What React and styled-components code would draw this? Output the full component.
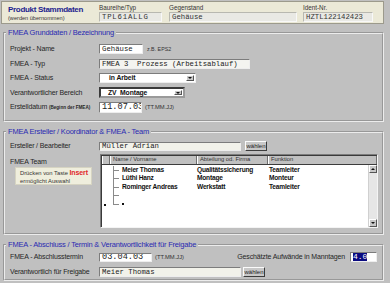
import React from "react";
import styled, { createGlobalStyle } from "styled-components";

const GlobalStyle = createGlobalStyle`
  html, body {
    margin: 0;
    padding: 0;
    background: #c0c0c0;
  }
  body {
    width: 390px;
    height: 283px;
    overflow: hidden;
    font-family: "Liberation Sans", Arial, sans-serif;
    color: #222;
  }
`;

const Page = styled.div`
  width: 390px;
  height: 283px;
  box-sizing: border-box;
  padding: 1px 6px 0 1px;
  display: flex;
  flex-direction: column;
`;

const Header = styled.div`
  height: 23px;
  box-sizing: border-box;
  display: flex;
  align-items: flex-start;
  background: #ebe9d7;
  border: 1px solid #9c9a8c;
`;

const TitleBlock = styled.div`
  width: 91px;
  padding: 3px 0 0 6px;
`;

const Title = styled.div`
  font-size: 8px;
  line-height: 10px;
  font-weight: bold;
  letter-spacing: -0.3px;
  color: #1e1e8e;
  white-space: nowrap;
`;

const SubTitle = styled.div`
  font-size: 5.6px;
  line-height: 7px;
  color: #333;
  white-space: nowrap;
`;

const HeadCol = styled.div`
  width: ${p => p.$w}px;
  margin-right: ${p => p.$mr || 0}px;
  padding-top: 1px;
`;

const HeadLabel = styled.div`
  font-size: 6.3px;
  line-height: 9px;
  color: #333;
`;

const HeadField = styled.div`
  height: 10px;
  box-sizing: border-box;
  background: #e9e9e4;
  border: 1px solid #b8b8b0;
  border-right-color: #f8f8f8;
  border-bottom-color: #f8f8f8;
  font-family: "Liberation Mono", monospace;
  font-size: 7.3px;
  line-height: 8px;
  padding-left: 2px;
  color: #333;
  letter-spacing: ${p => p.$ls || 0}px;
`;

const Section = styled.fieldset`
  margin: ${p => p.$mt}px 0 0 2px;
  padding: ${p => p.$pt}px 4px ${p => p.$pb}px 5px;
  border: 2px groove #ececec;
  min-width: 0;
`;

const Legend = styled.legend`
  margin-left: -4px;
  padding: 0 2px;
  font-size: 7.5px;
  letter-spacing: -0.2px;
  line-height: 10px;
  color: #2a2ab2;
`;

const Row = styled.div`
  display: grid;
  grid-template-columns: 89px 1fr;
  align-items: ${p => (p.$top ? "start" : "center")};
  height: ${p => p.$h || 14.5}px;
`;

const Label = styled.div`
  font-size: 7px;
  letter-spacing: -0.15px;
  line-height: 10px;
  color: #262626;
  white-space: nowrap;
  margin-top: ${p => p.$mt || 0}px;
`;

const Tiny = styled.span`
  font-size: 4.6px;
  letter-spacing: 0;
  font-weight: bold;
`;

const Line = styled.div`
  display: flex;
  align-items: center;
  gap: ${p => p.$gap || 4}px;
  min-width: 0;
`;

const TextBox = styled.div`
  width: ${p => p.$w}px;
  height: ${p => p.$h || 10}px;
  box-sizing: border-box;
  flex-shrink: 0;
  background: ${p => p.$bg || "#fff"};
  border: 1px solid #7c7c7c;
  border-right-color: #eee;
  border-bottom-color: #eee;
  font-family: "Liberation Mono", monospace;
  font-size: ${p => p.$fs || 7.3}px;
  line-height: ${p => (p.$h || 10) - 2}px;
  padding-left: 2px;
  color: #222;
  white-space: pre;
  overflow: hidden;
`;

const Hint = styled.span`
  font-size: ${p => p.$fs || 5.8}px;
  color: #333;
  white-space: nowrap;
`;

const Select = styled.div`
  width: ${p => p.$w}px;
  height: ${p => p.$h || 10}px;
  box-sizing: border-box;
  display: flex;
  align-items: stretch;
  background: #fff;
  border: ${p => (p.$focus ? "2px solid #3a3a3a" : "1px solid #7c7c7c")};
  border-right-color: ${p => (p.$focus ? "#9a9a9a" : "#eee")};
  border-bottom-color: ${p => (p.$focus ? "#9a9a9a" : "#eee")};
`;

const SelectText = styled.div`
  flex: 1;
  padding-left: ${p => p.$pl || 9}px;
  font-size: 6.8px;
  letter-spacing: -0.1px;
  font-weight: bold;
  line-height: ${p => p.$lh || 8}px;
  white-space: pre;
  color: #111;
`;

const ArrowBtn = styled.div`
  width: 8px;
  margin: 1px;
  box-sizing: border-box;
  background: #c8c8c8;
  border: 1px solid #fff;
  border-right-color: #555;
  border-bottom-color: #555;
  display: flex;
  align-items: center;
  justify-content: center;
`;

const Tri = styled.span`
  width: 0;
  height: 0;
  border-left: 2px solid transparent;
  border-right: 2px solid transparent;
  border-${p => (p.$up ? "bottom" : "top")}: 2px solid #111;
`;

const Button = styled.div`
  width: ${p => p.$w || 22}px;
  height: 10px;
  box-sizing: border-box;
  background: #c8c8c8;
  border: 1px solid #fbfbfb;
  border-right-color: #3c3c3c;
  border-bottom-color: #3c3c3c;
  font-size: 6px;
  line-height: 8px;
  text-align: center;
  color: #222;
`;

const InfoBox = styled.div`
  width: 77px;
  height: 18px;
  box-sizing: border-box;
  margin-left: 5px;
  padding: 1px 0 0 4px;
  background: #efeedd;
  border: 1px solid #d6d4c2;
  font-size: 5.8px;
  line-height: 8px;
  color: #333;
  white-space: nowrap;
`;

const Key = styled.span`
  color: #e0262a;
  font-weight: bold;
  font-size: 7px;
  letter-spacing: -0.1px;
`;

const Table = styled.div`
  width: 278px;
  height: 74px;
  box-sizing: border-box;
  margin-left: 1px;
  display: flex;
  flex-direction: column;
  background: #fff;
  border: 1px solid #7c7c7c;
  border-right-color: #f4f4f4;
  border-bottom-color: #f4f4f4;
  box-shadow: inset 1px 1px 0 #3a3a3a;
  padding: 1px 0 0 1px;
`;

const Cols = styled.div`
  display: grid;
  grid-template-columns: 8px 87px 71px 1fr;
`;

const HeadRow = styled(Cols)`
  height: 8px;
  background: #c0c0c0;
  border-bottom: 1px solid #3c3c3c;
`;

const HeadCell = styled.div`
  box-sizing: border-box;
  border-left: 1px solid #fff;
  border-right: 1px solid #6e6e6e;
  font-size: 5.8px;
  line-height: 7px;
  padding-left: 2px;
  color: #333;
  white-space: nowrap;
`;

const Body = styled.div`
  flex: 1;
  display: flex;
  min-height: 0;
`;

const Rows = styled.div`
  flex: 1;
  padding-top: 1px;
`;

const BodyRow = styled(Cols)`
  height: 8.5px;
  align-items: center;
`;

const Cell = styled.div`
  font-size: 6.6px;
  letter-spacing: -0.2px;
  line-height: 8px;
  font-weight: bold;
  color: #111;
  white-space: nowrap;
  padding-left: ${p => p.$pl || 0}px;
`;

const TreeCell = styled(Cell)`
  position: relative;
  height: 100%;
  display: flex;
  align-items: center;
  padding-left: 12px;

  &::before {
    content: "";
    position: absolute;
    left: 3px;
    top: 0;
    height: ${p => (p.$last ? "50%" : "100%")};
    border-left: 1px solid #8a8a8a;
  }
  &::after {
    content: "";
    position: absolute;
    left: 3px;
    top: 50%;
    width: 6px;
    border-top: 1px solid #8a8a8a;
  }
`;

const Dot = styled.span`
  display: inline-block;
  width: 2px;
  height: 2px;
  background: #111;
  margin-left: ${p => p.$ml || 0}px;
`;

const Scroll = styled.div`
  width: 8px;
  display: flex;
  flex-direction: column;
  background: #e6e6e6;
  border-left: 1px solid #d0d0d0;
`;

const ScrollBtn = styled(ArrowBtn)`
  width: 8px;
  height: 8px;
  margin: 0;
`;

const Track = styled.div`
  flex: 1;
`;

const Spacer = styled.div`
  flex: 1;
`;

const Selected = styled.span`
  background: #0a0a80;
  color: #fff;
`;

const team = [
  { name: "Meier Thomas", dept: "Qualitätssicherung", role: "Teamleiter" },
  { name: "Lüthi Hanz", dept: "Montage", role: "Monteur" },
  { name: "Rominger Andreas", dept: "Werkstatt", role: "Teamleiter" },
];

export default function App() {
  return (
    <>
      <GlobalStyle />
      <Page>
        <Header>
          <TitleBlock>
            <Title>Produkt Stammdaten</Title>
            <SubTitle>(werden übernommen)</SubTitle>
          </TitleBlock>
          <HeadCol $w={63} $mr={7}>
            <HeadLabel>Baureihe/Typ</HeadLabel>
            <HeadField $ls={0.8}>TPL61ALLG</HeadField>
          </HeadCol>
          <HeadCol $w={128} $mr={6}>
            <HeadLabel>Gegenstand</HeadLabel>
            <HeadField>Gehäuse</HeadField>
          </HeadCol>
          <HeadCol $w={70}>
            <HeadLabel>Ident-Nr.</HeadLabel>
            <HeadField>HZTL122142423</HeadField>
          </HeadCol>
        </Header>

        <Section $mt={4} $pt={4} $pb={5}>
          <Legend>FMEA Grunddaten / Bezeichnung</Legend>
          <Row>
            <Label>Projekt - Name</Label>
            <Line>
              <TextBox $w={44}>Gehäuse</TextBox>
              <Hint $fs={5.3}>z.B. EPS2</Hint>
            </Line>
          </Row>
          <Row>
            <Label>FMEA - Typ</Label>
            <TextBox $w={151} $bg="#f4f4f0">FMEA 3  Prozess (Arbeitsablauf)</TextBox>
          </Row>
          <Row>
            <Label>FMEA - Status</Label>
            <Select $w={97} $h={10}>
              <SelectText>in Arbeit</SelectText>
              <ArrowBtn><Tri /></ArrowBtn>
            </Select>
          </Row>
          <Row>
            <Label>Verantwortlicher Bereich</Label>
            <Select $w={86} $h={11} $focus>
              <SelectText $pl={7} $lh={7}>{"ZV  Montage"}</SelectText>
              <ArrowBtn><Tri /></ArrowBtn>
            </Select>
          </Row>
          <Row>
            <Label>
              Erstelldatum <Tiny>(Beginn der FMEA)</Tiny>
            </Label>
            <Line $gap={3}>
              <TextBox $w={43} $h={11} $fs={8.6}>11.07.03</TextBox>
              <Hint>(TT.MM.JJ)</Hint>
            </Line>
          </Row>
        </Section>

        <Section $mt={5} $pt={2} $pb={5}>
          <Legend>FMEA Ersteller / Koordinator &amp; FMEA - Team</Legend>
          <Row $h={15}>
            <Label>Ersteller / Bearbeiter</Label>
            <Line $gap={4}>
              <TextBox $w={142} $h={9} $bg="#f2f2ea">Müller Adrian</TextBox>
              <Button>wählen</Button>
            </Line>
          </Row>
          <Row $h={74} $top>
            <div>
              <Label $mt={3}>FMEA Team</Label>
              <InfoBox>
                Drücken von Taste <Key>Insert</Key>
                <br />
                ermöglicht Auswahl
              </InfoBox>
            </div>
            <Table>
              <HeadRow>
                <HeadCell />
                <HeadCell>Name / Vorname</HeadCell>
                <HeadCell>Abteilung od. Firma</HeadCell>
                <HeadCell>Funktion</HeadCell>
              </HeadRow>
              <Body>
                <Rows>
                  {team.map(t => (
                    <BodyRow key={t.name}>
                      <div />
                      <TreeCell>{t.name}</TreeCell>
                      <Cell>{t.dept}</Cell>
                      <Cell $pl={1}>{t.role}</Cell>
                    </BodyRow>
                  ))}
                  <BodyRow>
                    <div />
                    <TreeCell />
                  </BodyRow>
                  <BodyRow>
                    <Cell><Dot $ml={2} /></Cell>
                    <TreeCell $last><Dot /></TreeCell>
                  </BodyRow>
                </Rows>
                <Scroll>
                  <ScrollBtn><Tri $up /></ScrollBtn>
                  <Track />
                  <ScrollBtn><Tri /></ScrollBtn>
                </Scroll>
              </Body>
            </Table>
          </Row>
        </Section>

        <Section $mt={5} $pt={0} $pb={0}>
          <Legend>FMEA - Abschluss / Termin &amp; Verantwortlichkeit für Freigabe</Legend>
          <Row $h={15}>
            <Label>FMEA - Abschlusstermin</Label>
            <Line $gap={3}>
              <TextBox $w={53} $h={9} $fs={8.6}>03.04.03</TextBox>
              <Hint>(TT.MM.JJ)</Hint>
              <Spacer />
              <Label>Geschätzte Aufwände in Manntagen</Label>
              <TextBox $w={27} $h={10} $fs={8} style={{ marginLeft: 2, marginRight: 1 }}>
                <Selected>4.0</Selected>
              </TextBox>
            </Line>
          </Row>
          <Row $h={14}>
            <Label>Verantwortlich für Freigabe</Label>
            <Line $gap={2}>
              <TextBox $w={142} $h={10} $bg="#f2f2ea">Meier Thomas</TextBox>
              <Button>wählen</Button>
            </Line>
          </Row>
        </Section>
      </Page>
    </>
  );
}
